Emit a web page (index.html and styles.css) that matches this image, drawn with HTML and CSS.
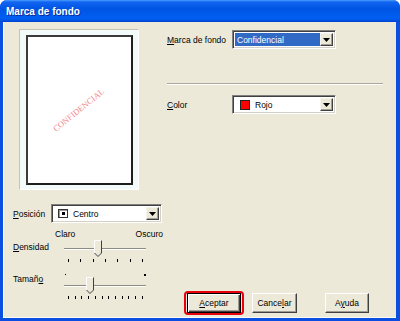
FILE: index.html
```html
<!DOCTYPE html>
<html lang="es">
<head>
    <meta charset="UTF-8">
    <title>Marca de fondo</title>
    <link rel="stylesheet" href="styles.css">
</head>
<body>

    <div class="window">
        <div class="titlebar">
            <span class="title">Marca de fondo</span>
        </div>

        <div class="client">
            <div class="left">
                <div class="preview">
                    <div class="page">
                        <span class="stamp">CONFIDENCIAL</span>
                    </div>
                </div>

                <div class="pos-row">
                    <span class="lbl lbl-pos"><u>P</u>osición</span>
                    <div class="combo combo-pos">
                        <span class="combo-text"><span class="pos-icon"><i></i></span>Centro</span>
                        <span class="combo-btn"><svg width="7" height="4" viewBox="0 0 7 4"><polygon points="0,0 7,0 3.5,4" fill="#000"/></svg></span>
                    </div>
                </div>

                <div class="range-labels">
                    <span>Claro</span>
                    <span>Oscuro</span>
                </div>

                <div class="slider-row">
                    <span class="lbl lbl-slider"><u>D</u>ensidad</span>
                    <div class="slider">
                        <div class="track"></div>
                        <svg class="thumb" style="left: 34px" width="8" height="17" viewBox="0 0 8 17">
                            <polygon points="0.5,0.5 7.5,0.5 7.5,13 4,16.5 0.5,13" fill="#ece9d8"/>
                            <polyline points="0.5,13 0.5,0.5 7.5,0.5" fill="none" stroke="#fff"/>
                            <polyline points="7.5,0.5 7.5,13 4,16.5 0.5,13" fill="none" stroke="#404040"/>
                        </svg>
                        <div class="ticks">
                            <i></i><i></i><i></i><i></i><i></i><i></i><i></i>
                        </div>
                    </div>
                </div>

                <div class="slider-row size-row">
                    <span class="lbl lbl-slider">Tamañ<u>o</u></span>
                    <div class="slider-group">
                        <div class="markers"><i class="minus"></i><i class="plus"></i></div>
                        <div class="slider">
                            <div class="track"></div>
                            <svg class="thumb" style="left: 26px" width="8" height="17" viewBox="0 0 8 17">
                                <polygon points="0.5,0.5 7.5,0.5 7.5,13 4,16.5 0.5,13" fill="#ece9d8"/>
                                <polyline points="0.5,13 0.5,0.5 7.5,0.5" fill="none" stroke="#fff"/>
                                <polyline points="7.5,0.5 7.5,13 4,16.5 0.5,13" fill="none" stroke="#404040"/>
                            </svg>
                            <div class="ticks">
                                <i></i><i></i><i></i><i></i><i></i><i></i><i></i><i></i><i></i><i></i><i></i><i></i>
                            </div>
                        </div>
                    </div>
                </div>
            </div>

            <div class="right">
                <div class="field-row">
                    <span class="lbl lbl-right"><u>M</u>arca de fondo</span>
                    <div class="combo">
                        <span class="combo-text selected">Confidencial</span>
                        <span class="combo-btn"><svg width="7" height="4" viewBox="0 0 7 4"><polygon points="0,0 7,0 3.5,4" fill="#000"/></svg></span>
                    </div>
                </div>

                <div class="separator"></div>

                <div class="field-row color-row">
                    <span class="lbl lbl-right"><u>C</u>olor</span>
                    <div class="combo">
                        <span class="combo-text"><span class="swatch"></span>Rojo</span>
                        <span class="combo-btn"><svg width="7" height="4" viewBox="0 0 7 4"><polygon points="0,0 7,0 3.5,4" fill="#000"/></svg></span>
                    </div>
                </div>

                <div class="spacer"></div>

                <div class="buttons">
                    <span class="highlight"><span class="btn btn-default"><u>A</u>ceptar</span></span>
                    <span class="btn btn-cancel">Cance<u>l</u>ar</span>
                    <span class="btn btn-help">A<u>y</u>uda</span>
                </div>
            </div>
        </div>
    </div>

</body>
</html>
```

FILE: styles.css
```css
* {
    box-sizing: border-box;
}

html, body {
    margin: 0;
    background: #fff;
}

body {
    font-family: 'Liberation Sans', Arial, sans-serif;
    font-size: 8.5px;
    color: #000;
}

u {
    text-decoration: underline;
    text-underline-offset: 1px;
}

.window {
    width: 400px;
    height: 321px;
    display: flex;
    flex-direction: column;
    background: #0a4fe0;
    border-radius: 7px 7px 0 0;
    overflow: hidden;
}

.titlebar {
    height: 22px;
    flex: none;
    display: flex;
    align-items: center;
    padding-left: 6px;
    background: linear-gradient(to bottom, #4a9cff 0, #1265f2 2px, #0054e3 9px, #005ef2 17px, #0058ea 20px, #003fc8 22px);
}

.title {
    color: #fff;
    font-weight: bold;
    font-size: 10px;
    text-shadow: 1px 1px #0a2a9c;
}

.client {
    flex: 1;
    display: flex;
    margin: 0 4px 3px 3px;
    background: #ece9d8;
    box-shadow: inset 1px 0 #fbfaf4, inset 0 -1px #fbfaf4;
}

/* left column */

.left {
    width: 164px;
    flex: none;
    padding: 7px 0 0 10px;
}

.preview {
    width: 120px;
    height: 161px;
    margin-left: 6px;
    padding: 5px 5px 4px 6px;
    background: #f3fafa;
    border: 1px solid #fff;
    border-top-color: #c6c3b4;
    border-left-color: #c6c3b4;
}

.page {
    height: 100%;
    display: flex;
    align-items: center;
    justify-content: center;
    background: #fff;
    border: 2px solid #1e1e1e;
    border-top-color: #3a3a3a;
    border-left-color: #3a3a3a;
}

.stamp {
    font-family: 'Liberation Serif', 'Times New Roman', serif;
    font-size: 8.5px;
    color: #f28b92;
    transform: rotate(-39deg);
    margin: 0 2px 0 0;
}

.lbl {
    line-height: 14px;
    white-space: nowrap;
}

.pos-row {
    display: flex;
    align-items: center;
    margin-top: 14px;
}

.lbl-pos {
    width: 38px;
}

.combo {
    width: 104px;
    height: 19px;
    display: flex;
    align-items: stretch;
    padding: 1px;
    background: #fff;
    border: 1px solid #fff;
    border-top-color: #808080;
    border-left-color: #808080;
    box-shadow: inset 1px 1px #404040, inset -1px -1px #d4d0c8;
}

.combo-pos {
    width: 111px;
}

.combo-text {
    flex: 1;
    display: flex;
    align-items: center;
    margin: 1px 0 1px 1px;
    padding-left: 2px;
    white-space: nowrap;
}

.combo-text.selected {
    background: #316ac5;
    color: #fff;
}

.combo-btn {
    width: 13px;
    margin: 1px 1px 1px 0;
    display: flex;
    align-items: center;
    justify-content: center;
    background: #ece9d8;
    border: 1px solid #404040;
    border-top-color: #f4f3ee;
    border-left-color: #f4f3ee;
    box-shadow: inset -1px -1px #a09f96;
}

.pos-icon {
    width: 10px;
    height: 9px;
    margin: 0 5px 0 2px;
    display: flex;
    align-items: center;
    justify-content: center;
    background: #fff;
    border: 1px solid #333;
    box-shadow: inset 1px 1px #9a9a9a;
}

.pos-icon i {
    width: 3px;
    height: 3px;
    background: #000;
}

.swatch {
    width: 10px;
    height: 10px;
    margin: 0 5px 0 3px;
    background: #ff0000;
    border: 1px solid #222;
}

.range-labels {
    width: 150px;
    display: flex;
    justify-content: space-between;
    padding-left: 42px;
    margin-top: 6px;
    line-height: 10px;
}

.slider-row {
    display: flex;
    align-items: flex-start;
    margin-top: 1px;
}

.size-row {
    margin-top: 10px;
}

.lbl-slider {
    width: 47px;
}

.slider {
    position: relative;
    width: 90px;
    height: 22px;
    padding-top: 8px;
}

.track {
    height: 0;
    margin: 0 4px;
    border-top: 1px solid #8d8c84;
    border-bottom: 1px solid #fff;
}

.thumb {
    position: absolute;
    top: 0;
}

.ticks {
    display: flex;
    justify-content: space-between;
    margin: 9px 7px 0 8px;
}

.ticks i {
    width: 1px;
    height: 3px;
    background: #000;
}

.markers {
    height: 5px;
    display: flex;
    justify-content: space-between;
    align-items: center;
    padding: 0 4px 0 5px;
}

.markers .minus {
    width: 1px;
    height: 1px;
    background: #000;
}

.markers .plus {
    width: 2px;
    height: 2px;
    background: #000;
}

/* right column */

.right {
    flex: 1;
    display: flex;
    flex-direction: column;
    padding-top: 8px;
}

.field-row {
    display: flex;
    align-items: center;
}

.lbl-right {
    width: 65px;
}

.separator {
    width: 216px;
    margin-top: 34px;
    border-top: 1px solid #aca899;
    border-bottom: 1px solid #fff;
}

.color-row {
    margin-top: 10px;
}

.spacer {
    flex: 1;
}

.buttons {
    display: flex;
    align-items: center;
    margin: 0 0 3px 17px;
}

.highlight {
    display: flex;
    padding: 0 1px;
    border: 2px solid #e8000b;
    border-radius: 4px;
}

.btn {
    height: 20px;
    display: flex;
    align-items: center;
    justify-content: center;
    background: #ece9d8;
    border: 1px solid #404040;
    border-top-color: #fff;
    border-left-color: #fff;
    box-shadow: inset -1px -1px #9d9c94;
}

.btn-default {
    width: 54px;
    border: 1px solid #000;
    box-shadow: inset 1px 1px #fff, inset -1px -1px #404040, inset -2px -2px #9d9c94;
}

.btn-cancel {
    width: 45px;
    margin-left: 8px;
}

.btn-help {
    width: 44px;
    margin-left: 28px;
}
```
